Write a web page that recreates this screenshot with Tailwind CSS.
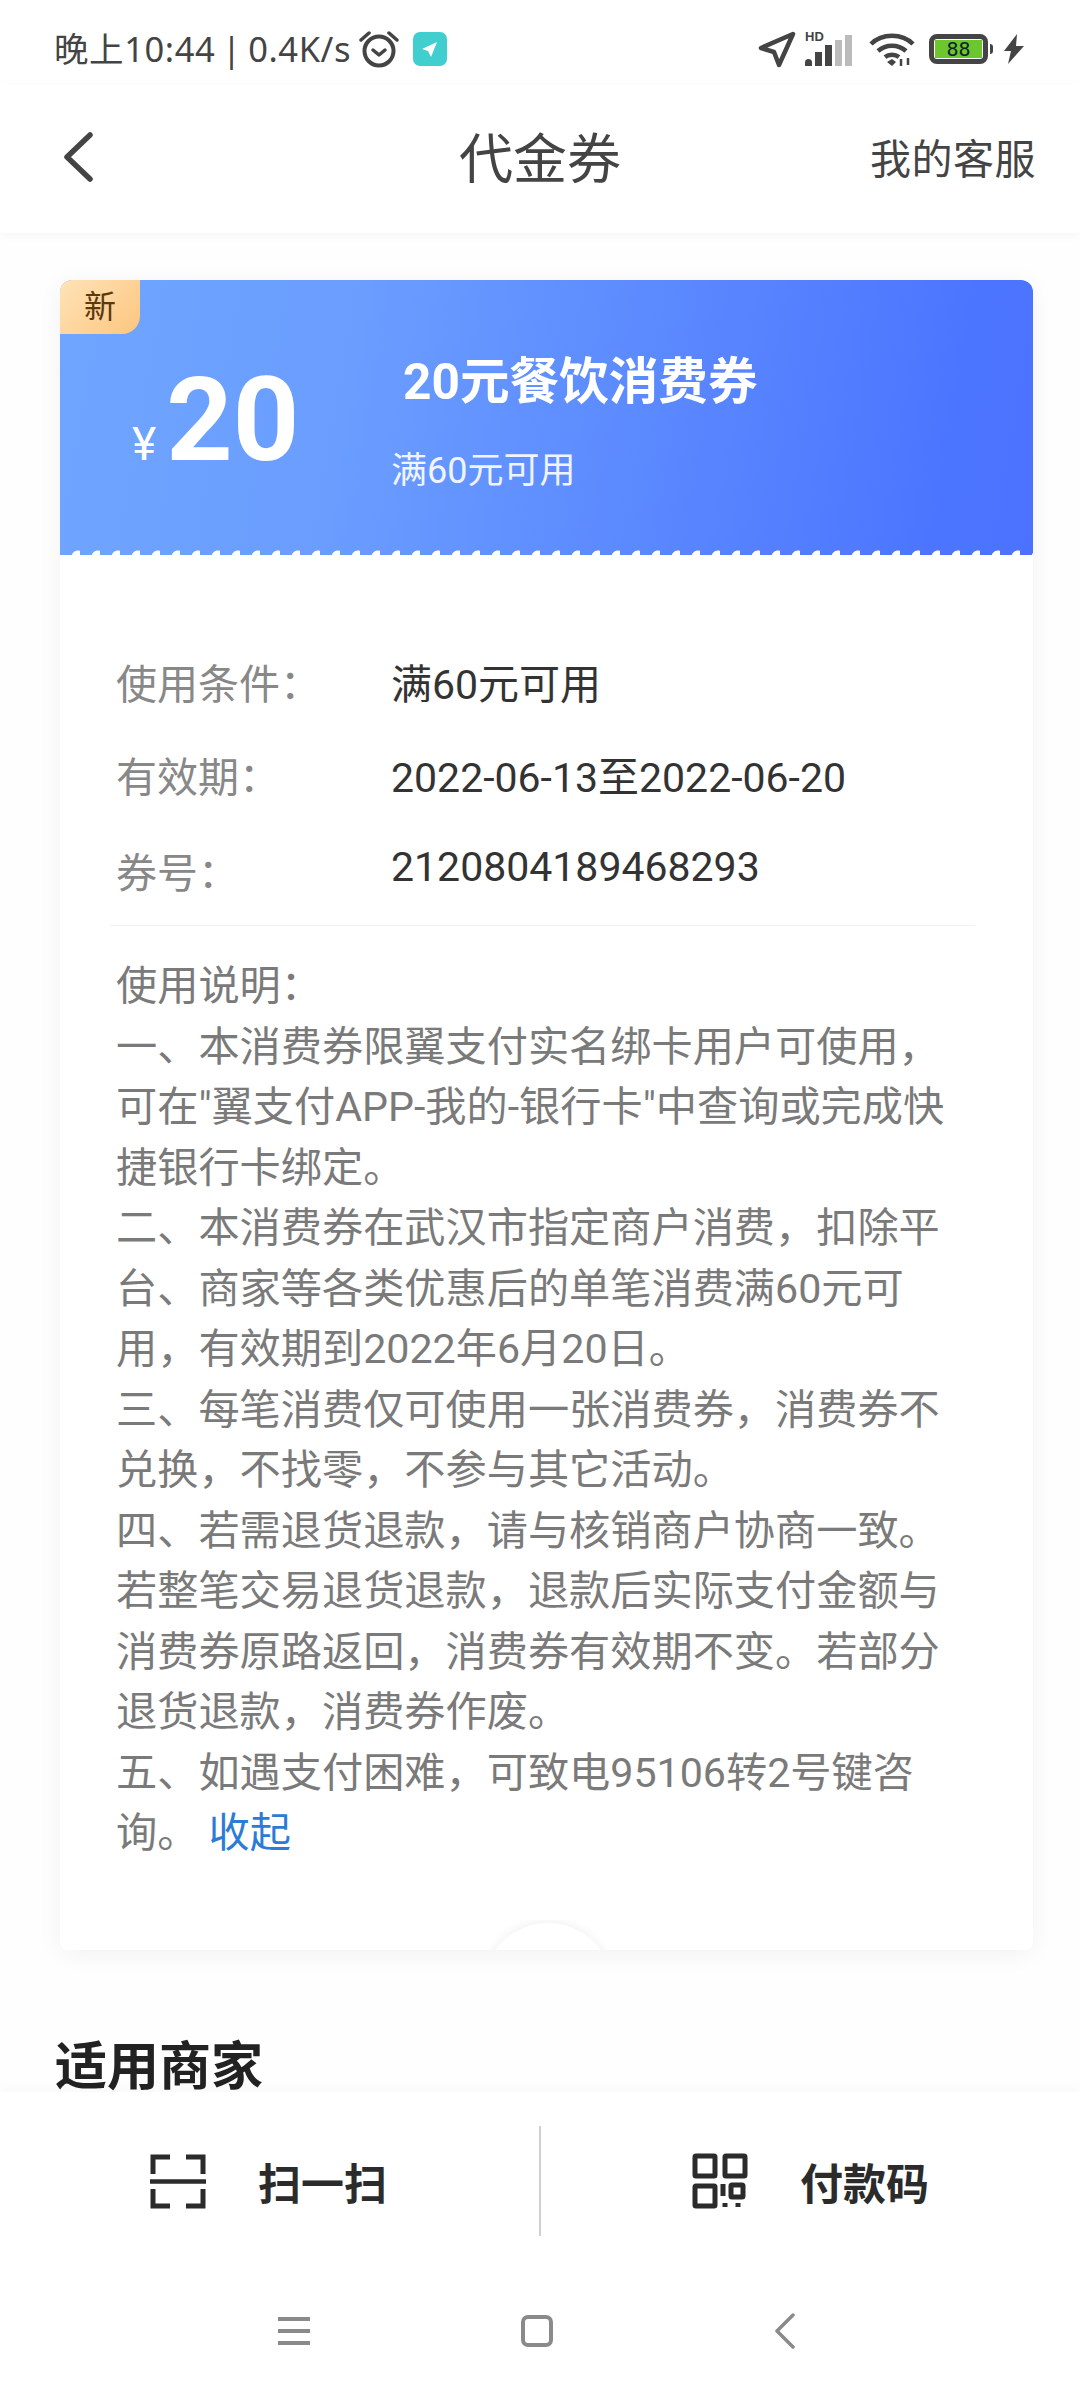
<!DOCTYPE html>
<html lang="zh"><head><meta charset="utf-8"><script src="https://cdn.jsdelivr.net/npm/@tailwindcss/browser@4"></script></head>
<body class="m-0 bg-white">
<div class="w-[1080px] h-[2400px] flex flex-col overflow-hidden bg-[#fefefe] font-['Roboto','Noto_Sans_CJK_SC',sans-serif]">
  <!-- status bar -->
  <div class="h-[85px] shrink-0 bg-white flex items-center justify-between pl-[54px] pr-[56px] pt-[13px] relative z-10">
    <div class="flex items-center">
      <span class="text-[34.5px] leading-none text-[#444] font-['Noto_Sans','Noto_Sans_CJK_SC',sans-serif] whitespace-nowrap tracking-[0.6px] [word-spacing:-3px]">晚上10:44 | 0.4K/s</span>
      <svg class="ml-[8px]" width="40" height="38" viewBox="0 0 40 38" fill="none" stroke="#444"><circle cx="20" cy="21" r="14.5" stroke-width="4"/><path d="M14 20l6 5 6-5" stroke-width="3.5" stroke-linecap="round" stroke-linejoin="round"/><path d="M2 10l8-7M38 10l-8-7" stroke-width="3.5" stroke-linecap="round"/></svg>
      <div class="ml-[14px] w-[34px] h-[34px] rounded-[7px] bg-[#40cfce] flex items-center justify-center">
        <svg width="18" height="18" viewBox="0 0 18 18"><path d="M16 2L1 9l6 2 3 6z" fill="#fff"/></svg>
      </div>
    </div>
    <div class="flex items-center">
      <svg width="38" height="37" viewBox="0 0 38 37" fill="none"><path d="M35 3L3 17l13 4 5 13z" stroke="#444" stroke-width="4.5" stroke-linejoin="round"/></svg>
      <div class="ml-[9px] relative w-[52px] h-[34px]">
        <span class="absolute left-0 top-[-2px] text-[13px] font-bold leading-none text-[#444] font-['Liberation_Sans',sans-serif]">HD</span>
        <div class="absolute left-0 bottom-0 flex items-end gap-[3px]">
          <div class="w-[7px] h-[7px] bg-[#444] rounded-t-sm"></div><div class="w-[7px] h-[14px] bg-[#444]"></div><div class="w-[7px] h-[21px] bg-[#444]"></div><div class="w-[7px] h-[26px] bg-[#bbb]"></div><div class="w-[7px] h-[31px] bg-[#bbb]"></div>
        </div>
      </div>
      <svg class="ml-[12px]" width="46" height="36" viewBox="0 0 46 36" fill="none" stroke="#444" stroke-width="4.5"><path d="M2 13C13 2 33 2 44 13M9 20c8-7 20-7 28 0M16 26c4-3 10-3 14 0"/><path d="M18 31l5-3 4 3-4 4z" fill="#444" stroke="none"/><path d="M32 28v7M39 27v7" stroke-width="2.5"/></svg>
      <div class="ml-[14px] w-[59px] h-[30px] border-[5px] border-[#444] rounded-[8px] flex items-center p-[1px]">
        <div class="w-full h-full bg-[#6cc72e] flex items-center justify-center text-[20px] leading-none text-[#123] font-['DejaVu_Sans_Mono',monospace]">88</div>
      </div>
      <div class="ml-[2px] w-[3px] h-[10px] bg-[#444] rounded-r-sm"></div>
      <svg class="ml-[11px]" width="20" height="30" viewBox="0 0 20 30"><path d="M13 0L0 17h7L4 30 20 12h-8z" fill="#444"/></svg>
    </div>
  </div>
  <!-- header -->
  <div class="h-[148px] shrink-0 bg-white relative z-10 shadow-[0_2px_10px_rgba(0,0,0,0.04)] flex items-center justify-between pl-[63px] pr-[44px] pb-[4px]">
    <svg width="30" height="50" viewBox="0 0 30 50" fill="none"><path d="M27 3L4 25l23 22" stroke="#444" stroke-width="5.5" stroke-linecap="round" stroke-linejoin="round"/></svg>
    <span class="absolute left-0 right-0 top-[36px] text-center text-[54px] leading-[80px] text-[#444]">代金券</span>
    <span class="text-[41px] leading-none text-[#444] tracking-[0.5px] pt-[6px]">我的客服</span>
  </div>
  <!-- content -->
  <div class="flex-1 min-h-0 overflow-hidden px-[60px] pt-[47px] relative">
    <div class="w-[973px] bg-white rounded-[8px] shadow-[0_4px_24px_rgba(0,0,0,0.05)] relative">
      <div class="h-[275px] relative overflow-hidden rounded-t-[12px] bg-[linear-gradient(100deg,#6fa5ff_0%,#6a9dff_30%,#4c75ff_90%,#4a72ff_100%)]">
        <div class="absolute left-0 top-0 w-[80px] h-[54px] rounded-br-[18px] bg-[linear-gradient(135deg,#ffe3b8,#fcc67e)] flex items-center justify-center text-[32px] leading-none text-[#5b3a12]">新</div>
        <div class="absolute left-0 right-0 bottom-0 h-[5px] bg-[radial-gradient(circle_at_18px_7px,#ffffff_6px,transparent_7px)] bg-[length:20px_5px]"></div>
        <div class="flex h-full">
          <div class="w-[332px] shrink-0 flex items-baseline pl-[72px] pt-[81px]">
            <span class="text-[46px] leading-none text-white">¥</span>
            <span class="ml-[10px] text-[116px] leading-[118px] font-bold text-white">20</span>
          </div>
          <div class="flex flex-col">
            <div class="ml-[11px] mt-[70px] text-[49.6px] leading-[64px] font-bold text-white whitespace-nowrap">20元餐饮消费券</div>
            <div class="-ml-[1px] mt-[37px] text-[36px] leading-[40px] text-white/90 whitespace-nowrap">满60元可用</div>
          </div>
        </div>
      </div>
      <div class="px-[56px] pt-[100px] pb-[86px] relative">
        <div class="flex text-[41px] h-[62px] items-center"><span class="w-[275px] text-[#888]">使用条件：</span><span class="text-[#333]">满60元可用</span></div>
        <div class="flex text-[41px] h-[62px] items-center mt-[31px]"><span class="w-[275px] text-[#888]">有效期：</span><span class="text-[#333]">2022-06-13至2022-06-20</span></div>
        <div class="flex text-[41px] h-[62px] items-center mt-[31px]"><span class="w-[275px] text-[#888] pt-[6px]">券号：</span><span class="text-[#333] pb-[9px]">2120804189468293</span></div>
        <div class="h-px bg-[#f1f1f1] -ml-[6px] mr-[2px] mt-[22px]"></div>
        <div class="mt-[30px] text-[41.2px] leading-[60.5px] text-[#7a7a7a] whitespace-nowrap">
          <div>使用说明：</div>
          <div>一、本消费券限翼支付实名绑卡用户可使用，</div>
          <div>可在"翼支付APP-我的-银行卡"中查询或完成快</div>
          <div>捷银行卡绑定。</div>
          <div>二、本消费券在武汉市指定商户消费，扣除平</div>
          <div>台、商家等各类优惠后的单笔消费满60元可</div>
          <div>用，有效期到2022年6月20日。</div>
          <div>三、每笔消费仅可使用一张消费券，消费券不</div>
          <div>兑换，不找零，不参与其它活动。</div>
          <div>四、若需退货退款，请与核销商户协商一致。</div>
          <div>若整笔交易退货退款，退款后实际支付金额与</div>
          <div>消费券原路返回，消费券有效期不变。若部分</div>
          <div>退货退款，消费券作废。</div>
          <div>五、如遇支付困难，可致电95106转2号键咨</div>
          <div>询。 <span class="text-[#2c7bd6]">收起</span></div>
        </div>
        <div class="absolute left-[423px] bottom-0 w-[130px] h-[30px] overflow-hidden">
          <div class="w-[130px] h-[130px] rounded-full bg-white shadow-[0_-3px_10px_rgba(0,0,0,0.05)] mt-[3px]"></div>
        </div>
      </div>
    </div>
    <div class="mt-[83px] -ml-[5px] text-[52px] leading-[70px] font-bold text-[#222] whitespace-nowrap">适用商家</div>
  </div>
  <!-- bottom actions -->
  <div class="h-[308px] shrink-0 bg-white shadow-[0_-4px_12px_rgba(0,0,0,0.025)] relative z-10 flex flex-col">
    <div class="h-[178px] flex items-center pt-[-3px]">
      <div class="w-[539px] flex items-center pl-[150px]">
        <svg width="56" height="55" viewBox="0 0 56 55" fill="none" stroke="#2b2b2b" stroke-width="5"><path d="M20 3H3v17M36 3h17v17M3 35v17h17M53 35v17H36"/><path d="M0 27.500h56" stroke-width="4.500"/></svg>
        <span class="ml-[52px] pt-[8px] text-[43px] leading-none font-bold text-[#2b2b2b]">扫一扫</span>
      </div>
      <div class="w-[2px] h-[110px] bg-[#cfcfcf]"></div>
      <div class="flex-1 flex items-center pl-[151px]">
        <svg width="56" height="56" viewBox="0 0 56 56" fill="none" stroke="#2b2b2b" stroke-width="5"><rect x="3" y="3" width="20" height="20" rx="1"/><rect x="33" y="3" width="20" height="20" rx="1"/><rect x="3" y="33" width="20" height="20" rx="1"/><path d="M31 31v12"/><rect x="39" y="32" width="12" height="12" rx="1"/><path d="M33 50v4M46 50v4"/></svg>
        <span class="ml-[52px] pt-[8px] text-[43px] leading-none font-bold text-[#2b2b2b]">付款码</span>
      </div>
    </div>
    <div class="flex-1 relative">
      <div class="absolute left-[278px] top-[47px] w-[32px] flex flex-col gap-[8px]">
        <div class="h-[4px] bg-[#8a8a8a]"></div><div class="h-[4px] bg-[#8a8a8a]"></div><div class="h-[4px] bg-[#8a8a8a]"></div>
      </div>
      <div class="absolute left-[521px] top-[45px] w-[32px] h-[32px] border-[4px] border-[#8a8a8a] rounded-[7px]"></div>
      <svg class="absolute left-[774px] top-[43px]" width="22" height="36" viewBox="0 0 22 36" fill="none"><path d="M19 2L3 18l16 16" stroke="#8a8a8a" stroke-width="3.500" stroke-linecap="round" stroke-linejoin="round"/></svg>
    </div>
  </div>
</div>
</body></html>
